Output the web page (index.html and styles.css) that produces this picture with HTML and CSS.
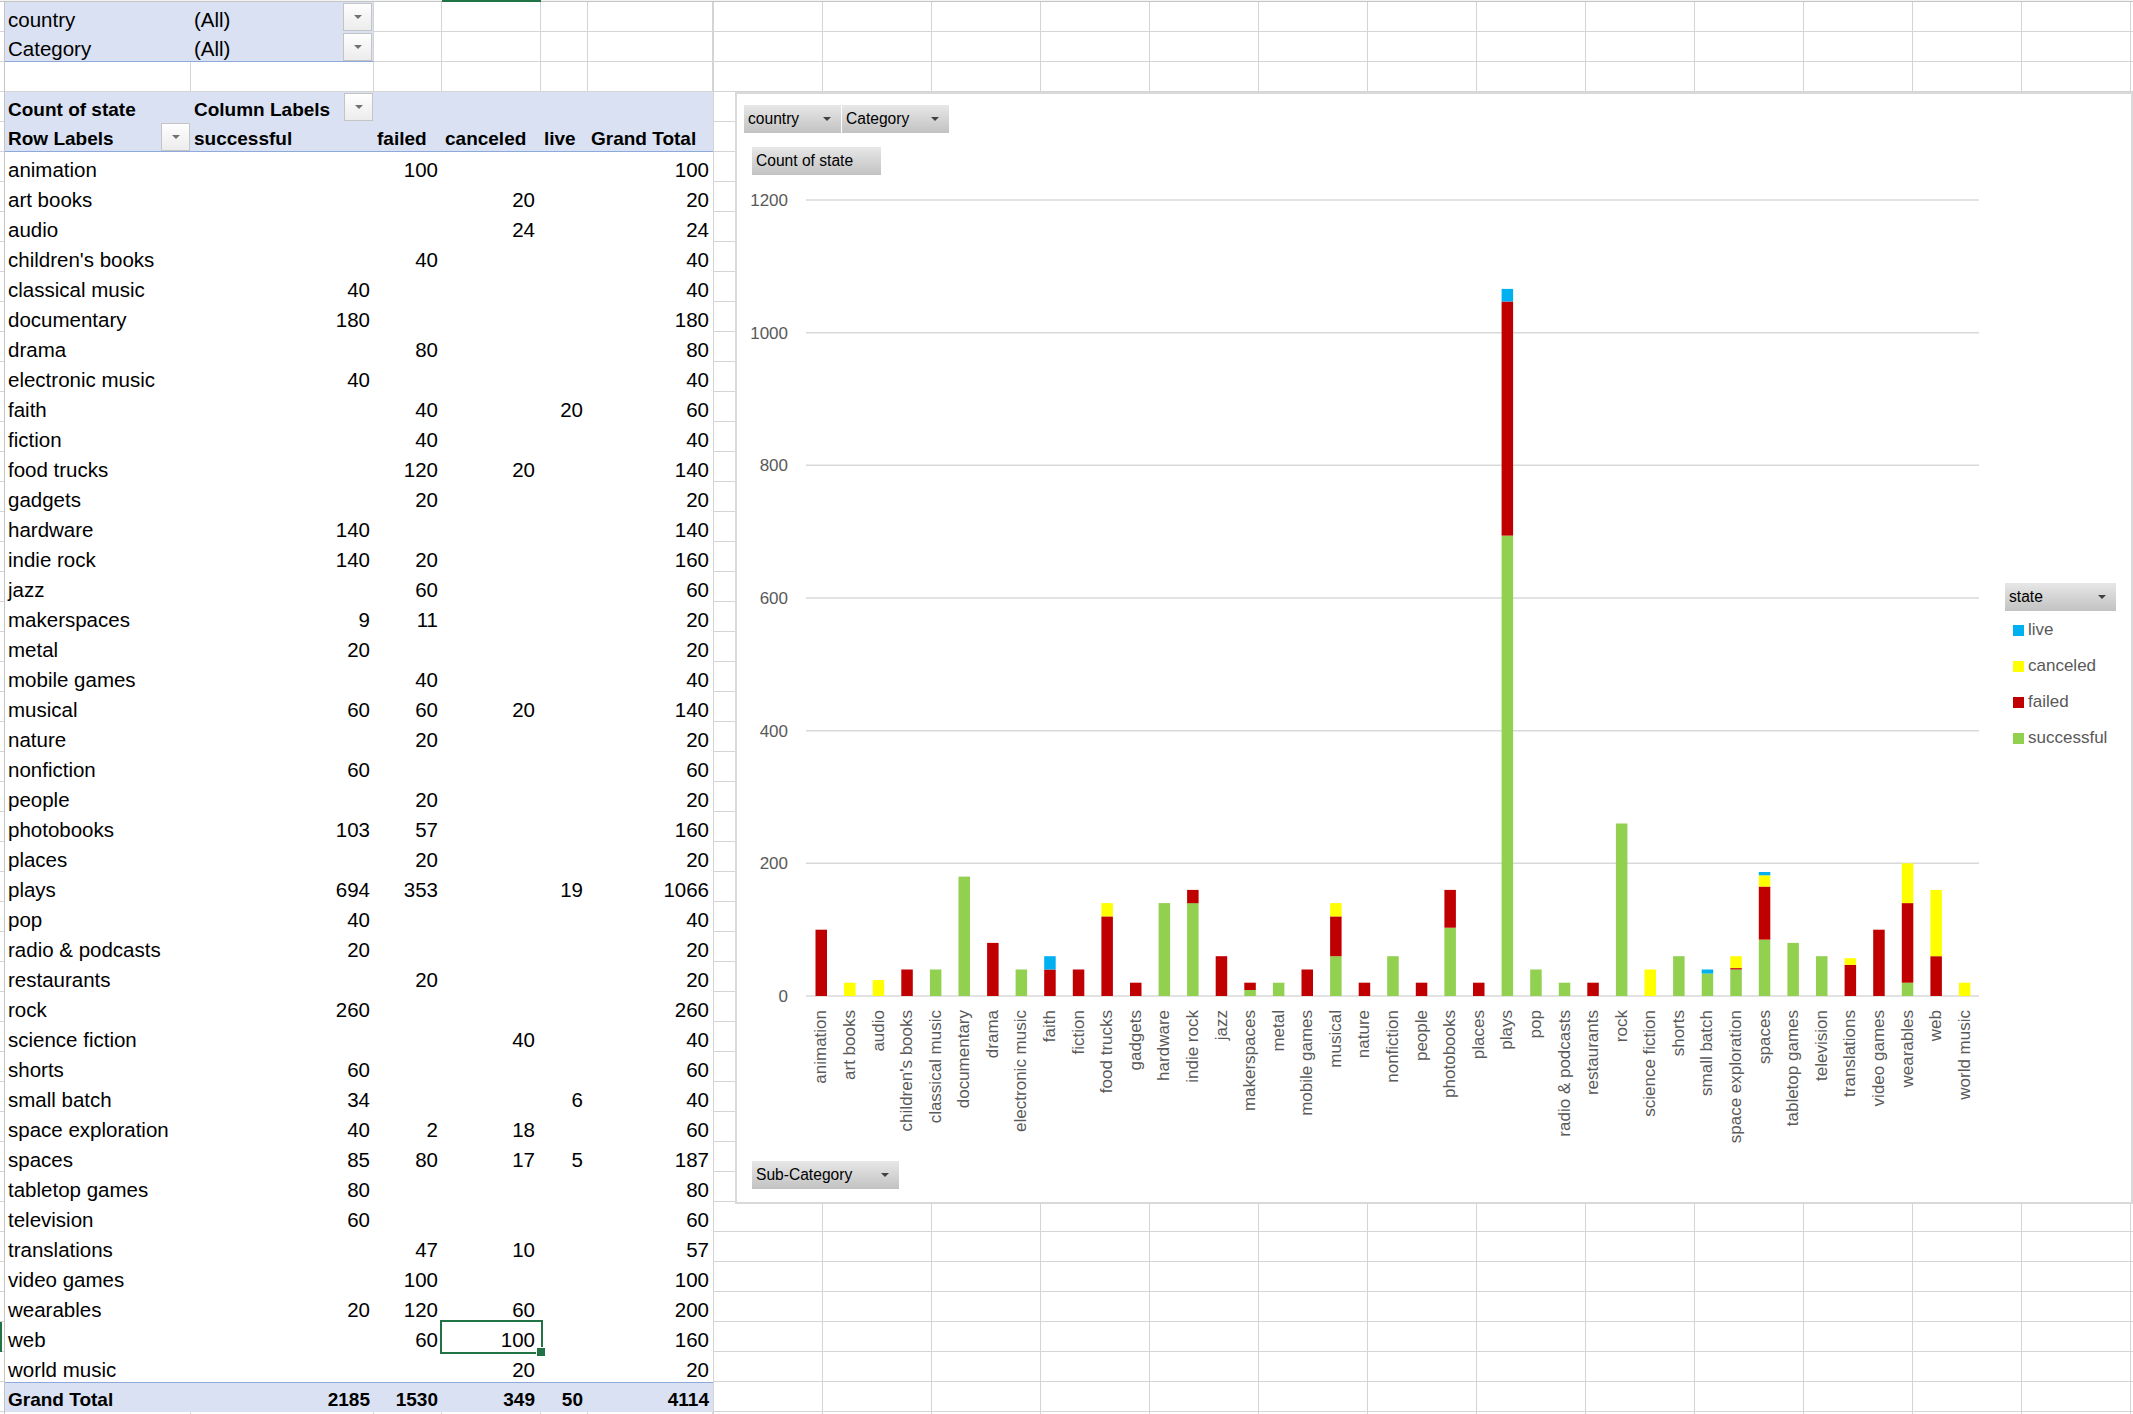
FILE: index.html
```html
<!DOCTYPE html>
<html lang="en">
<head>
<meta charset="utf-8">
<title>Pivot</title>
<link rel="stylesheet" href="styles.css">
</head>
<body>
<div class="sheet">
  <div class="colhead"><div class="colsel"></div></div>
  <div class="main">
    <div class="rowhead"><div class="rowsel"></div></div>
    <div class="pivot">
      <div class="row">
        <div class="ca fill">country</div>
        <div class="cb fill vr">(All)<span class="dd"></span></div>
        <div class="cc g"></div><div class="cd g"></div><div class="ce g"></div><div class="cf g"></div>
      </div>
      <div class="row">
        <div class="ca fill bb">Category</div>
        <div class="cb fill bb vr">(All)<span class="dd"></span></div>
        <div class="cc g"></div><div class="cd g"></div><div class="ce g"></div><div class="cf g"></div>
      </div>
      <div class="row">
        <div class="ca g"></div><div class="cb g"></div><div class="cc g"></div><div class="cd g"></div><div class="ce g"></div><div class="cf g"></div>
      </div>
      <div class="row">
        <div class="ca fill b">Count of state</div>
        <div class="cb fill b">Column Labels<span class="dd"></span></div>
        <div class="cc fill"></div><div class="cd fill"></div><div class="ce fill"></div><div class="cf fill"></div>
      </div>
      <div class="row">
        <div class="ca fill bb b">Row Labels<span class="dd"></span></div>
        <div class="cb fill bb b">successful</div>
        <div class="cc fill bb b">failed</div>
        <div class="cd fill bb b">canceled</div>
        <div class="ce fill bb b">live</div>
        <div class="cf fill bb b">Grand Total</div>
      </div>
      <div class="row"><div class="ca">animation</div><div class="cc n">100</div><div class="cf n">100</div></div>
      <div class="row"><div class="ca">art books</div><div class="cd n">20</div><div class="cf n">20</div></div>
      <div class="row"><div class="ca">audio</div><div class="cd n">24</div><div class="cf n">24</div></div>
      <div class="row"><div class="ca">children's books</div><div class="cc n">40</div><div class="cf n">40</div></div>
      <div class="row"><div class="ca">classical music</div><div class="cb n">40</div><div class="cf n">40</div></div>
      <div class="row"><div class="ca">documentary</div><div class="cb n">180</div><div class="cf n">180</div></div>
      <div class="row"><div class="ca">drama</div><div class="cc n">80</div><div class="cf n">80</div></div>
      <div class="row"><div class="ca">electronic music</div><div class="cb n">40</div><div class="cf n">40</div></div>
      <div class="row"><div class="ca">faith</div><div class="cc n">40</div><div class="ce n">20</div><div class="cf n">60</div></div>
      <div class="row"><div class="ca">fiction</div><div class="cc n">40</div><div class="cf n">40</div></div>
      <div class="row"><div class="ca">food trucks</div><div class="cc n">120</div><div class="cd n">20</div><div class="cf n">140</div></div>
      <div class="row"><div class="ca">gadgets</div><div class="cc n">20</div><div class="cf n">20</div></div>
      <div class="row"><div class="ca">hardware</div><div class="cb n">140</div><div class="cf n">140</div></div>
      <div class="row"><div class="ca">indie rock</div><div class="cb n">140</div><div class="cc n">20</div><div class="cf n">160</div></div>
      <div class="row"><div class="ca">jazz</div><div class="cc n">60</div><div class="cf n">60</div></div>
      <div class="row"><div class="ca">makerspaces</div><div class="cb n">9</div><div class="cc n">11</div><div class="cf n">20</div></div>
      <div class="row"><div class="ca">metal</div><div class="cb n">20</div><div class="cf n">20</div></div>
      <div class="row"><div class="ca">mobile games</div><div class="cc n">40</div><div class="cf n">40</div></div>
      <div class="row"><div class="ca">musical</div><div class="cb n">60</div><div class="cc n">60</div><div class="cd n">20</div><div class="cf n">140</div></div>
      <div class="row"><div class="ca">nature</div><div class="cc n">20</div><div class="cf n">20</div></div>
      <div class="row"><div class="ca">nonfiction</div><div class="cb n">60</div><div class="cf n">60</div></div>
      <div class="row"><div class="ca">people</div><div class="cc n">20</div><div class="cf n">20</div></div>
      <div class="row"><div class="ca">photobooks</div><div class="cb n">103</div><div class="cc n">57</div><div class="cf n">160</div></div>
      <div class="row"><div class="ca">places</div><div class="cc n">20</div><div class="cf n">20</div></div>
      <div class="row"><div class="ca">plays</div><div class="cb n">694</div><div class="cc n">353</div><div class="ce n">19</div><div class="cf n">1066</div></div>
      <div class="row"><div class="ca">pop</div><div class="cb n">40</div><div class="cf n">40</div></div>
      <div class="row"><div class="ca">radio &amp; podcasts</div><div class="cb n">20</div><div class="cf n">20</div></div>
      <div class="row"><div class="ca">restaurants</div><div class="cc n">20</div><div class="cf n">20</div></div>
      <div class="row"><div class="ca">rock</div><div class="cb n">260</div><div class="cf n">260</div></div>
      <div class="row"><div class="ca">science fiction</div><div class="cd n">40</div><div class="cf n">40</div></div>
      <div class="row"><div class="ca">shorts</div><div class="cb n">60</div><div class="cf n">60</div></div>
      <div class="row"><div class="ca">small batch</div><div class="cb n">34</div><div class="ce n">6</div><div class="cf n">40</div></div>
      <div class="row"><div class="ca">space exploration</div><div class="cb n">40</div><div class="cc n">2</div><div class="cd n">18</div><div class="cf n">60</div></div>
      <div class="row"><div class="ca">spaces</div><div class="cb n">85</div><div class="cc n">80</div><div class="cd n">17</div><div class="ce n">5</div><div class="cf n">187</div></div>
      <div class="row"><div class="ca">tabletop games</div><div class="cb n">80</div><div class="cf n">80</div></div>
      <div class="row"><div class="ca">television</div><div class="cb n">60</div><div class="cf n">60</div></div>
      <div class="row"><div class="ca">translations</div><div class="cc n">47</div><div class="cd n">10</div><div class="cf n">57</div></div>
      <div class="row"><div class="ca">video games</div><div class="cc n">100</div><div class="cf n">100</div></div>
      <div class="row"><div class="ca">wearables</div><div class="cb n">20</div><div class="cc n">120</div><div class="cd n">60</div><div class="cf n">200</div></div>
      <div class="row"><div class="ca">web</div><div class="cc n">60</div><div class="cd n sel">100</div><div class="cf n">160</div></div>
      <div class="row"><div class="ca">world music</div><div class="cd n">20</div><div class="cf n">20</div></div>
      <div class="row">
        <div class="ca fill bt b">Grand Total</div>
        <div class="cb fill bt b n">2185</div>
        <div class="cc fill bt b n">1530</div>
        <div class="cd fill bt b n">349</div>
        <div class="ce fill bt b n">50</div>
        <div class="cf fill bt b n">4114</div>
      </div>
      <div class="row tail">
        <div class="ca vr"></div><div class="cb vr"></div><div class="cc vr"></div><div class="cd vr"></div><div class="ce vr"></div><div class="cf vr"></div>
      </div>
    </div>
    <div class="rest"></div>
  </div>

  <div class="chart">
    <svg class="plot" width="1394" height="1108" viewBox="0 0 1394 1108" xmlns="http://www.w3.org/2000/svg">
      <g class="grid">
        <line x1="69" y1="106" x2="1242" y2="106"/>
        <line x1="69" y1="238.7" x2="1242" y2="238.7"/>
        <line x1="69" y1="371.3" x2="1242" y2="371.3"/>
        <line x1="69" y1="504" x2="1242" y2="504"/>
        <line x1="69" y1="636.7" x2="1242" y2="636.7"/>
        <line x1="69" y1="769.3" x2="1242" y2="769.3"/>
        <line x1="69" y1="902" x2="1242" y2="902"/>
      </g>
      <g class="ylab">
        <text x="51" y="112">1200</text>
        <text x="51" y="244.7">1000</text>
        <text x="51" y="377.3">800</text>
        <text x="51" y="510">600</text>
        <text x="51" y="642.7">400</text>
        <text x="51" y="775.3">200</text>
        <text x="51" y="908">0</text>
      </g>
      <g class="bars">
        <rect class="f" x="78.5" y="835.7" width="11.5" height="66.3"/>
        <rect class="k" x="107.1" y="888.7" width="11.5" height="13.3"/>
        <rect class="k" x="135.7" y="886.1" width="11.5" height="15.9"/>
        <rect class="f" x="164.3" y="875.5" width="11.5" height="26.5"/>
        <rect class="s" x="192.9" y="875.5" width="11.5" height="26.5"/>
        <rect class="s" x="221.5" y="782.6" width="11.5" height="119.4"/>
        <rect class="f" x="250.1" y="848.9" width="11.5" height="53.1"/>
        <rect class="s" x="278.6" y="875.5" width="11.5" height="26.5"/>
        <rect class="f" x="307.2" y="875.5" width="11.5" height="26.5"/>
        <rect class="l" x="307.2" y="862.2" width="11.5" height="13.3"/>
        <rect class="f" x="335.8" y="875.5" width="11.5" height="26.5"/>
        <rect class="f" x="364.4" y="822.4" width="11.5" height="79.6"/>
        <rect class="k" x="364.4" y="809.1" width="11.5" height="13.3"/>
        <rect class="f" x="393.0" y="888.7" width="11.5" height="13.3"/>
        <rect class="s" x="421.6" y="809.1" width="11.5" height="92.9"/>
        <rect class="s" x="450.1" y="809.1" width="11.5" height="92.9"/>
        <rect class="f" x="450.1" y="795.9" width="11.5" height="13.3"/>
        <rect class="f" x="478.7" y="862.2" width="11.5" height="39.8"/>
        <rect class="s" x="507.3" y="896.0" width="11.5" height="6.0"/>
        <rect class="f" x="507.3" y="888.7" width="11.5" height="7.3"/>
        <rect class="s" x="535.9" y="888.7" width="11.5" height="13.3"/>
        <rect class="f" x="564.5" y="875.5" width="11.5" height="26.5"/>
        <rect class="s" x="593.1" y="862.2" width="11.5" height="39.8"/>
        <rect class="f" x="593.1" y="822.4" width="11.5" height="39.8"/>
        <rect class="k" x="593.1" y="809.1" width="11.5" height="13.3"/>
        <rect class="f" x="621.7" y="888.7" width="11.5" height="13.3"/>
        <rect class="s" x="650.2" y="862.2" width="11.5" height="39.8"/>
        <rect class="f" x="678.8" y="888.7" width="11.5" height="13.3"/>
        <rect class="s" x="707.4" y="833.7" width="11.5" height="68.3"/>
        <rect class="f" x="707.4" y="795.9" width="11.5" height="37.8"/>
        <rect class="f" x="736.0" y="888.7" width="11.5" height="13.3"/>
        <rect class="s" x="764.6" y="441.6" width="11.5" height="460.4"/>
        <rect class="f" x="764.6" y="207.5" width="11.5" height="234.1"/>
        <rect class="l" x="764.6" y="194.9" width="11.5" height="12.6"/>
        <rect class="s" x="793.2" y="875.5" width="11.5" height="26.5"/>
        <rect class="s" x="821.8" y="888.7" width="11.5" height="13.3"/>
        <rect class="f" x="850.3" y="888.7" width="11.5" height="13.3"/>
        <rect class="s" x="878.9" y="729.5" width="11.5" height="172.5"/>
        <rect class="k" x="907.5" y="875.5" width="11.5" height="26.5"/>
        <rect class="s" x="936.1" y="862.2" width="11.5" height="39.8"/>
        <rect class="s" x="964.7" y="879.4" width="11.5" height="22.6"/>
        <rect class="l" x="964.7" y="875.5" width="11.5" height="4.0"/>
        <rect class="s" x="993.3" y="875.5" width="11.5" height="26.5"/>
        <rect class="f" x="993.3" y="874.1" width="11.5" height="1.4"/>
        <rect class="k" x="993.3" y="862.2" width="11.5" height="11.9"/>
        <rect class="s" x="1021.8" y="845.6" width="11.5" height="56.4"/>
        <rect class="f" x="1021.8" y="792.5" width="11.5" height="53.1"/>
        <rect class="k" x="1021.8" y="781.3" width="11.5" height="11.3"/>
        <rect class="l" x="1021.8" y="778.0" width="11.5" height="3.3"/>
        <rect class="s" x="1050.4" y="848.9" width="11.5" height="53.1"/>
        <rect class="s" x="1079.0" y="862.2" width="11.5" height="39.8"/>
        <rect class="f" x="1107.6" y="870.8" width="11.5" height="31.2"/>
        <rect class="k" x="1107.6" y="864.2" width="11.5" height="6.6"/>
        <rect class="f" x="1136.2" y="835.7" width="11.5" height="66.3"/>
        <rect class="s" x="1164.8" y="888.7" width="11.5" height="13.3"/>
        <rect class="f" x="1164.8" y="809.1" width="11.5" height="79.6"/>
        <rect class="k" x="1164.8" y="769.3" width="11.5" height="39.8"/>
        <rect class="f" x="1193.4" y="862.2" width="11.5" height="39.8"/>
        <rect class="k" x="1193.4" y="795.9" width="11.5" height="66.3"/>
        <rect class="k" x="1221.9" y="888.7" width="11.5" height="13.3"/>
      </g>
      <g class="xlab">
        <text transform="translate(89.3 916) rotate(-90)">animation</text>
        <text transform="translate(117.9 916) rotate(-90)">art books</text>
        <text transform="translate(146.5 916) rotate(-90)">audio</text>
        <text transform="translate(175.1 916) rotate(-90)">children's books</text>
        <text transform="translate(203.6 916) rotate(-90)">classical music</text>
        <text transform="translate(232.2 916) rotate(-90)">documentary</text>
        <text transform="translate(260.8 916) rotate(-90)">drama</text>
        <text transform="translate(289.4 916) rotate(-90)">electronic music</text>
        <text transform="translate(318.0 916) rotate(-90)">faith</text>
        <text transform="translate(346.6 916) rotate(-90)">fiction</text>
        <text transform="translate(375.1 916) rotate(-90)">food trucks</text>
        <text transform="translate(403.7 916) rotate(-90)">gadgets</text>
        <text transform="translate(432.3 916) rotate(-90)">hardware</text>
        <text transform="translate(460.9 916) rotate(-90)">indie rock</text>
        <text transform="translate(489.5 916) rotate(-90)">jazz</text>
        <text transform="translate(518.1 916) rotate(-90)">makerspaces</text>
        <text transform="translate(546.7 916) rotate(-90)">metal</text>
        <text transform="translate(575.2 916) rotate(-90)">mobile games</text>
        <text transform="translate(603.8 916) rotate(-90)">musical</text>
        <text transform="translate(632.4 916) rotate(-90)">nature</text>
        <text transform="translate(661.0 916) rotate(-90)">nonfiction</text>
        <text transform="translate(689.6 916) rotate(-90)">people</text>
        <text transform="translate(718.2 916) rotate(-90)">photobooks</text>
        <text transform="translate(746.7 916) rotate(-90)">places</text>
        <text transform="translate(775.3 916) rotate(-90)">plays</text>
        <text transform="translate(803.9 916) rotate(-90)">pop</text>
        <text transform="translate(832.5 916) rotate(-90)">radio &amp; podcasts</text>
        <text transform="translate(861.1 916) rotate(-90)">restaurants</text>
        <text transform="translate(889.7 916) rotate(-90)">rock</text>
        <text transform="translate(918.3 916) rotate(-90)">science fiction</text>
        <text transform="translate(946.8 916) rotate(-90)">shorts</text>
        <text transform="translate(975.4 916) rotate(-90)">small batch</text>
        <text transform="translate(1004.0 916) rotate(-90)">space exploration</text>
        <text transform="translate(1032.6 916) rotate(-90)">spaces</text>
        <text transform="translate(1061.2 916) rotate(-90)">tabletop games</text>
        <text transform="translate(1089.8 916) rotate(-90)">television</text>
        <text transform="translate(1118.4 916) rotate(-90)">translations</text>
        <text transform="translate(1146.9 916) rotate(-90)">video games</text>
        <text transform="translate(1175.5 916) rotate(-90)">wearables</text>
        <text transform="translate(1204.1 916) rotate(-90)">web</text>
        <text transform="translate(1232.7 916) rotate(-90)">world music</text>
      </g>
    </svg>

    <div class="cbtn arr b-country">country</div>
    <div class="cbtn arr b-cat">Category</div>
    <div class="cbtn b-count">Count of state</div>
    <div class="cbtn arr b-state">state</div>
    <div class="legend">
      <div class="li"><span class="sw sw-live"></span>live</div>
      <div class="li"><span class="sw sw-canc"></span>canceled</div>
      <div class="li"><span class="sw sw-fail"></span>failed</div>
      <div class="li"><span class="sw sw-succ"></span>successful</div>
    </div>
    <div class="cbtn arr b-sub">Sub-Category</div>
  </div>
</div>
</body>
</html>
```

FILE: styles.css
```css
* { box-sizing: border-box; margin: 0; padding: 0; }
html, body { width: 2133px; height: 1414px; overflow: hidden; background: #fff; }
body { font-family: "Liberation Sans", Arial, sans-serif; color: #000; }

.sheet { position: relative; width: 2133px; height: 1414px; display: flex; flex-direction: column; }

.colhead { height: 2px; flex: none; display: flex; background: linear-gradient(#f3f3f3 0 1px, #c4c4c4 1px 2px); }
.colsel { margin-left: 442px; width: 99px; height: 2px; background: #217346; }

.main { flex: 1; display: flex; min-height: 0; }

.rowhead {
  width: 5px; flex: none; border-right: 1px solid #c4c4c4;
  background: linear-gradient(to bottom, transparent 0 29px, #d4d4d4 29px 30px) 0 0 / 100% 30px;
  display: flex; flex-direction: column;
}
.rowsel { margin-top: 1320px; width: 2px; height: 30px; background: #217346; }

.pivot { width: 708px; flex: none; display: flex; flex-direction: column; }

.rest {
  flex: 1;
  background-image:
    linear-gradient(to right, #d4d4d4 0 1px, transparent 1px),
    linear-gradient(to bottom, transparent 0 29px, #d4d4d4 29px 30px);
  background-size: 109px 30px;
}

.row { display: grid; grid-template-columns: 186px 183px 68px 99px 47px 125px; height: 30px; flex: none; }
.row > div {
  grid-row: 1; display: flex; align-items: flex-end; height: 30px;
  padding: 0 4px 0 3px; font-size: 20.5px; line-height: 24px; white-space: nowrap;
}
.row.tail { height: 2px; }
.row.tail > div { height: 2px; }

.ca { grid-column: 1; }
.cb { grid-column: 2; }
.cc { grid-column: 3; }
.cd { grid-column: 4; }
.ce { grid-column: 5; }
.cf { grid-column: 6; }

.n { justify-content: flex-end; }
.row > .cd.n { padding-right: 6px; }
.row > .ce.n { padding-right: 5px; }

.g { border-right: 1px solid #d4d4d4; border-bottom: 1px solid #d4d4d4; }
.vr { border-right: 1px solid #d4d4d4; }
.fill { background: #d9e1f2; }
.bb { border-bottom: 1px solid #8ea9db; }
.bt { border-top: 1px solid #8ea9db; }
.row > .b { font-weight: 700; font-size: 19px; }

.dd {
  flex: none; width: 29px; height: 28px; margin: 1px -3px 0 auto; align-self: flex-start;
  border: 1px solid #c4c4c4; background: linear-gradient(#fefefe, #ececec);
  display: flex; align-items: center; justify-content: center;
}
.dd::after {
  content: ""; border-left: 4px solid transparent; border-right: 4px solid transparent;
  border-top: 4px solid #707070;
}

.sel { position: relative; outline: 2px solid #217346; }
.sel::after {
  content: ""; position: absolute; right: -5px; bottom: -5px; width: 8px; height: 8px;
  background: #217346; border: 1px solid #fff;
}

/* chart */
.chart {
  position: absolute; left: 735px; top: 92px; width: 1398px; height: 1112px;
  border: 2px solid #d9d9d9; background: #fff;
}
.plot { position: absolute; left: 0; top: 0; }
.plot .grid line { stroke: #d9d9d9; stroke-width: 1.5; }
.plot text { font-family: "Liberation Sans", Arial, sans-serif; font-size: 17px; fill: #595959; }
.plot .ylab text { text-anchor: end; }
.plot .xlab text { text-anchor: end; }
.plot .s { fill: #92d050; }
.plot .f { fill: #c00000; }
.plot .k { fill: #ffff00; }
.plot .l { fill: #00b0f0; }

.cbtn {
  position: absolute; height: 28px; display: flex; align-items: center;
  padding: 0 10px 0 4px; font-size: 15.6px; color: #000; white-space: nowrap;
  background: linear-gradient(#e7e7e7, #c2c2c2);
}
.cbtn.arr::after {
  content: ""; margin-left: auto; border-left: 4px solid transparent; border-right: 4px solid transparent;
  border-top: 4px solid #404040;
}
.b-country { left: 7px; top: 11px; width: 97px; }
.b-cat { left: 105px; top: 11px; width: 107px; }
.b-count { left: 15px; top: 53px; width: 129px; }
.b-state { left: 1268px; top: 489px; width: 111px; }
.b-sub { left: 15px; top: 1067px; width: 147px; }

.legend { position: absolute; left: 1276px; top: 518px; display: flex; flex-direction: column; }
.li { height: 36px; display: flex; align-items: center; gap: 4px; font-size: 17px; color: #595959; }
.sw { width: 11px; height: 11px; flex: none; }
.sw-live { background: #00b0f0; }
.sw-canc { background: #ffff00; }
.sw-fail { background: #c00000; }
.sw-succ { background: #92d050; }
```
